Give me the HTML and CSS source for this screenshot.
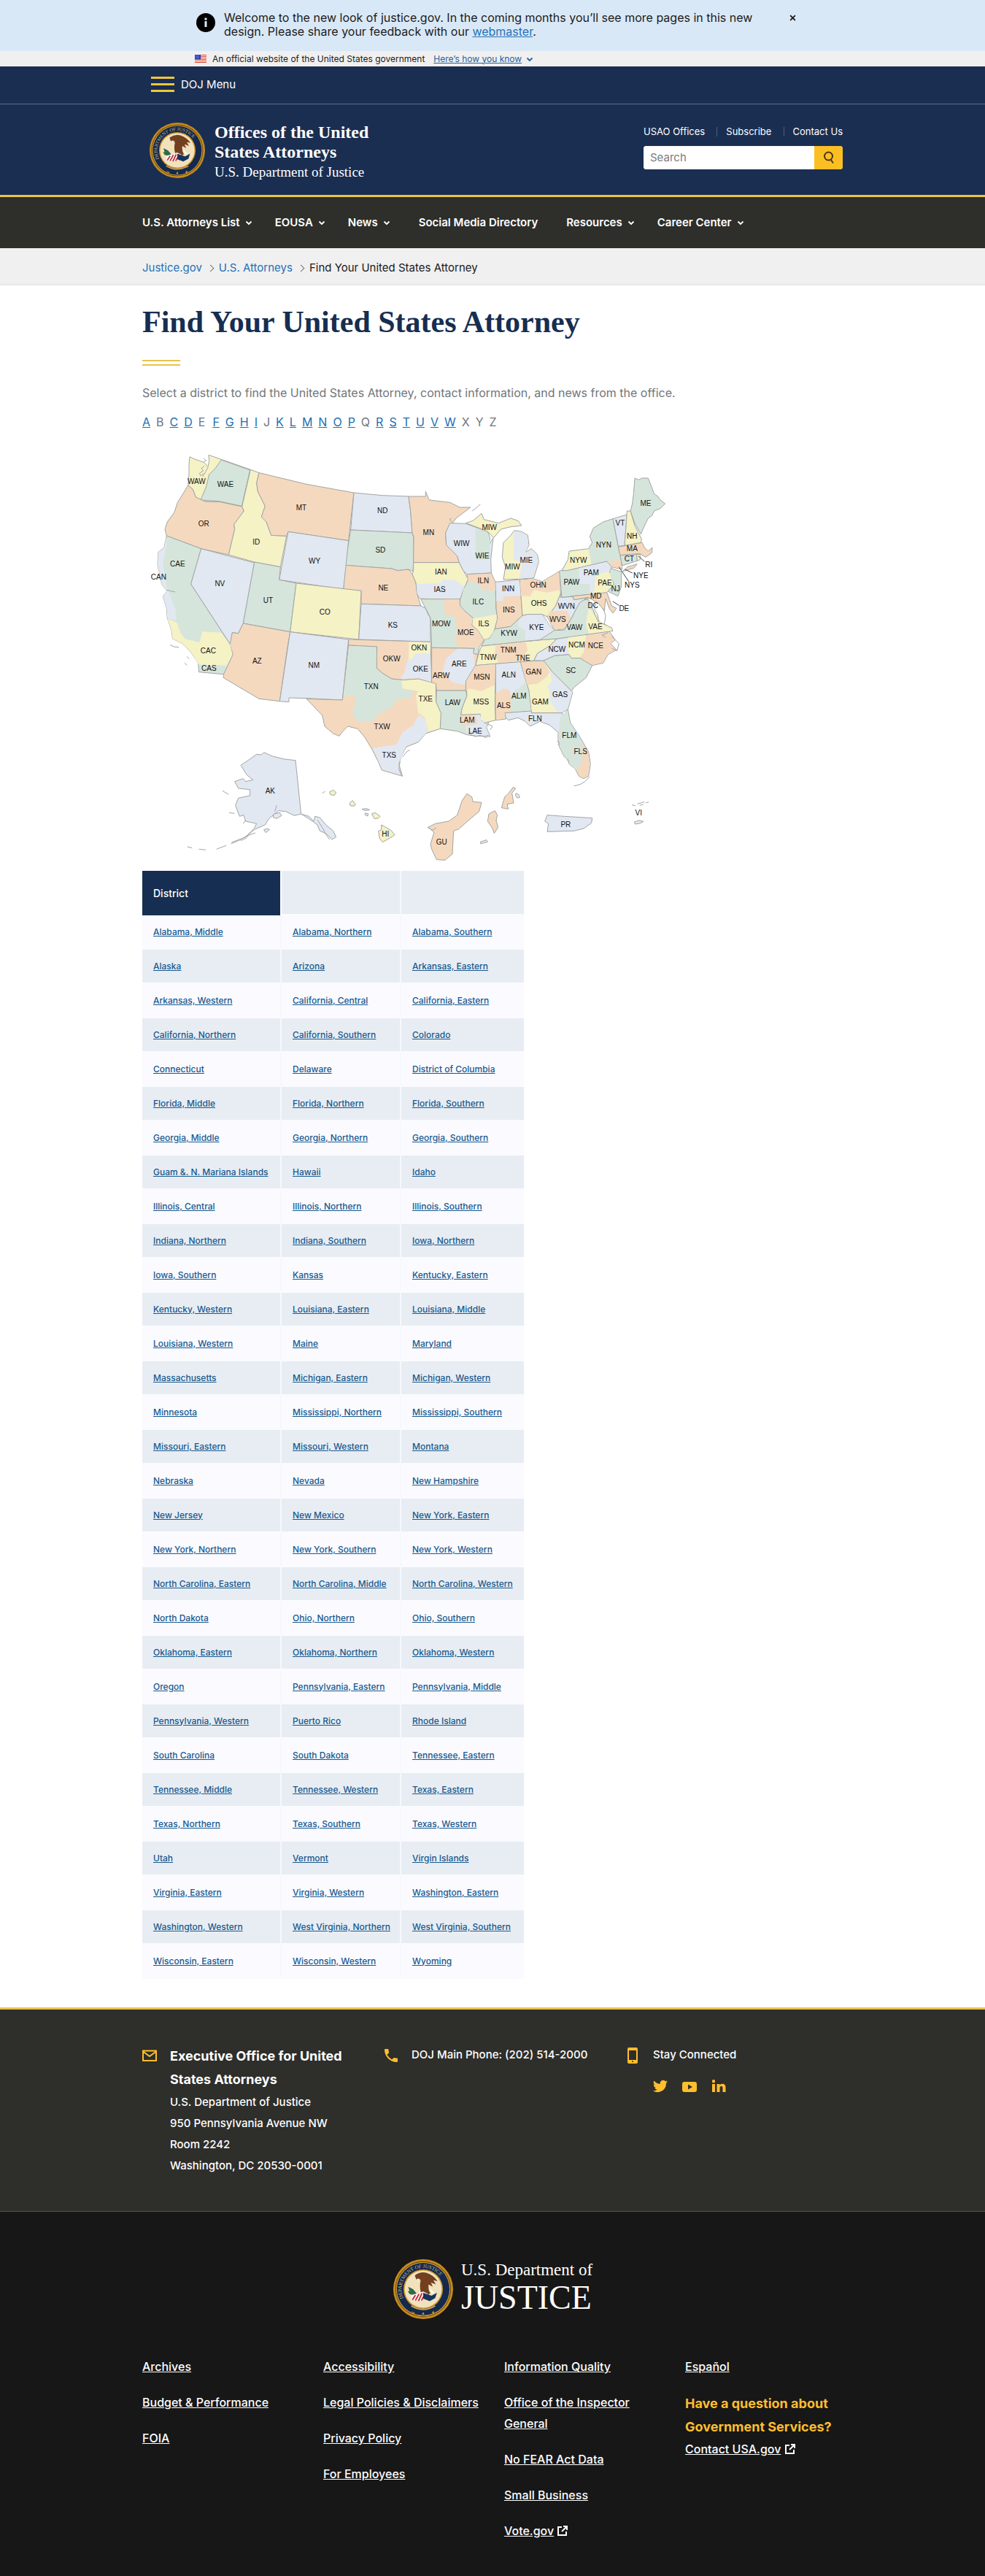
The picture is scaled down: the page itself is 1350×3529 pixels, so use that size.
FILE: index.html
```html
<!DOCTYPE html>
<html lang="en">
<head>
<meta charset="utf-8">
<meta name="viewport" content="width=device-width, initial-scale=1">
<title>Offices of the United States Attorneys | Find Your United States Attorney</title>
<link rel="stylesheet" href="styles.css">
</head>
<body>
<svg class="defs" width="0" height="0" aria-hidden="true">
<defs>
<symbol id="chev" viewBox="0 0 10 10"><path d="M1.5 3.5L5 7l3.500-3.500" fill="none" stroke="currentColor" stroke-width="1.800"/></symbol>
<symbol id="ext" viewBox="0 0 16 16"><path d="M7 3H2v11h11V9M9 2h5v5M14 2L7 9" fill="none" stroke="currentColor" stroke-width="2"/></symbol>
<symbol id="seal" viewBox="0 0 100 100">
<circle cx="50" cy="50" r="50" fill="#c78a1c"/><circle cx="50" cy="50" r="46.500" fill="#4a3a1c"/><circle cx="50" cy="50" r="45.500" fill="#d59b2a"/><circle cx="50" cy="50" r="44" fill="#14294d"/>
<circle cx="50" cy="50" r="33" fill="#c99429"/><circle cx="50" cy="50" r="31" fill="#f1e2bd"/>
<path id="arc" d="M18 67A36 36 0 1 1 82 67" fill="none"/>
<text font-family="Liberation Serif, serif" font-size="8.500" fill="#c9b984"><textPath href="#arc" startOffset="2">DEPARTMENT OF JUSTICE</textPath></text>
<path d="M31 87l1.500 3 3-1-2 2.500M50 89l1.500 3-3 0zM67 87l1 3-3 0z" fill="#d59b2a" stroke="#d59b2a"/>
<path d="M30 78Q50 90 70 78" fill="none" stroke="#c7a565" stroke-width="2"/>
<path d="M36 27Q46 20 56 23Q68 27 74 37L67 35L71 42L63 39L66 46L59 42Q58 52 62 57L54 62Q46 60 45 50Q44 41 46 36L38 33Z" fill="#73401f"/>
<path d="M25 46l8 4 6 7-2 5-9-6z" fill="#2c6b4c"/><path d="M24 53l6 1 3 6-6-2z" fill="#2c6b4c"/>
<path d="M30 60L50 54L58 58L45 70L30 68Z" fill="#f9f1ea"/>
<path d="M32 68l5-8M37 69l6-11M42 70l6-13M47 69l6-11" stroke="#b8283a" stroke-width="2.200"/>
<path d="M50 56L64 61L73 56L70 65L61 70L50 66Z" fill="#16345f"/><path d="M60 48l4 9 5-1z" fill="#fff"/><path d="M46 34l-6-2 1 4z" fill="#fff"/>
</symbol>
</defs>
</svg>

<section class="alert" aria-label="Site notice">
<div class="narrow alert-in">
<svg class="info" viewBox="0 0 26 26" aria-hidden="true"><circle cx="13" cy="13" r="13"/><path d="M11.500 11h3v8h-3zM11.500 6.500h3v3h-3z" fill="#d9e8f6"/></svg>
<p>Welcome to the new look of justice.gov. In the coming months you’ll see more pages in this new design. Please share your feedback with our <a href="#">webmaster</a>.</p>
<button class="close" type="button" aria-label="Close"><svg viewBox="0 0 8 8"><path d="M1 1l6 6M7 1L1 7" stroke="#1b1b1b" stroke-width="1.600"/></svg></button>
</div>
</section>

<section class="gov" aria-label="Official website">
<div class="narrow gov-in">
<svg class="flag" viewBox="0 0 16 11" aria-hidden="true"><path fill="#fff" d="M0 0h16v11H0z"/><path d="M0 .5h16M0 2.500h16M0 4.500h16M0 6.500h16M0 8.500h16M0 10.500h16" stroke="#db3e1f"/><path fill="#1e33b1" d="M0 0h8v6H0z"/><path d="M1 1.500h6M1 3h6M1 4.500h6" stroke="#fff" stroke-width=".6" stroke-dasharray="1 1"/></svg>
<span>An official website of the United States government</span>
<button type="button"><u>Here’s how you know</u><svg class="chev"><use href="#chev"/></svg></button>
</div>
</section>

<header class="top">
<div class="menu-row"><div class="wrap">
<button class="menu" type="button"><span class="bars"><i></i><i></i><i></i></span>DOJ Menu</button>
</div></div>
<div class="wrap brand-row">
<a class="brand" href="#"><svg class="seal"><use href="#seal"/></svg><span class="brand-text"><b>Offices of the United States Attorneys</b><span>U.S. Department of Justice</span></span></a>
<div class="tools">
<ul class="quick"><li><a href="#">USAO Offices</a></li><li><a href="#">Subscribe</a></li><li><a href="#">Contact Us</a></li></ul>
<form class="search" role="search"><input type="search" placeholder="Search" aria-label="Search"><button type="submit" aria-label="Search"><svg viewBox="0 0 16 20"><circle cx="7.500" cy="8" r="5.500"/><path d="M10.500 12.500l3.500 5"/></svg></button></form>
</div>
</div>
</header>

<nav class="nav" aria-label="Primary">
<ul class="wrap">
<li><button type="button">U.S. Attorneys List<svg class="chev"><use href="#chev"/></svg></button></li>
<li><button type="button">EOUSA<svg class="chev"><use href="#chev"/></svg></button></li>
<li><button type="button">News<svg class="chev"><use href="#chev"/></svg></button></li>
<li class="plain"><a href="#">Social Media Directory</a></li>
<li><button type="button">Resources<svg class="chev"><use href="#chev"/></svg></button></li>
<li><button type="button">Career Center<svg class="chev"><use href="#chev"/></svg></button></li>
</ul>
</nav>

<nav class="crumbs" aria-label="Breadcrumb">
<ol class="wrap">
<li><a href="#">Justice.gov</a></li><li><a href="#">U.S. Attorneys</a></li><li>Find Your United States Attorney</li>
</ol>
</nav>

<main class="wrap main">
<h1>Find Your United States Attorney</h1>
<div class="rule"></div>
<p class="lead">Select a district to find the United States Attorney, contact information, and news from the office.</p>
<p class="letters"><a href="#">A</a><span>B</span><a href="#">C</a><a href="#">D</a><span class="wide">E</span><a href="#">F</a><a href="#">G</a><a href="#">H</a><a href="#">I</a><span>J</span><a href="#">K</a><a href="#">L</a><a href="#">M</a><a href="#">N</a><a href="#">O</a><a href="#">P</a><span>Q</span><a href="#">R</a><a href="#">S</a><a href="#">T</a><a href="#">U</a><a href="#">V</a><a href="#">W</a><span>X</span><span>Y</span><span>Z</span></p>

<svg class="map" viewBox="15 30 2190 1749" role="img" aria-label="Map of United States Attorney districts">
<g class="area">
<path class="y" d="M210 77L225 85 268 100 285 118 290 95 288 70 340 88 460 130 425 282 330 262 275 262 235 243 222 210 203 195 207 150 207 110Z"/>
<path class="g" d="M340 90L458 132 424 280 330 260 255 255 262 238 278 200 290 150 315 125Z"/>
<path class="p" d="M203 195L222 210 235 243 275 262 330 262 425 282 433 300 392 355 395 375 370 480 257 455 115 402 108 375 118 345 147 305 160 265 185 225Z"/>
<path class="y" d="M460 130L495 143 485 185 490 220 515 270 520 280 505 325 525 345 545 400 608 403 583 530 476 510 370 480 395 375 392 355 433 300 425 282Z"/>
<path class="p" d="M495 143L690 190 885 225 863 422 615 385 608 403 545 400 525 345 505 325 520 280 490 220 485 185Z"/>
<path class="b" d="M885 225L1000 236 1110 240 1118 300 1125 390 872 378Z"/>
<path class="g" d="M872 378L1125 390 1131 410 1131 490 1128 548 1110 540 1065 545 1040 537 848 523Z"/>
<path class="p" d="M848 523L1040 537 1065 545 1110 540 1125 560 1140 595 1145 640 1160 690 915 682 915 628 842 622Z"/>
<path class="b" d="M615 385L863 422 842 622 578 583Z"/>
<path class="g" d="M115 402L257 455 215 600 378 850 388 890 360 972 248 962 245 925 215 880 180 845 140 825 135 790 118 740 115 700 100 650 118 630 95 600 78 520 80 470 105 450Z"/>
<path class="b" d="M257 455L476 513 430 762 410 803 385 800 378 850 215 600Z"/>
<path class="g" d="M476 510L583 530 578 583 648 597 623 797 430 762Z"/>
<path class="y" d="M648 597L915 628 905 828 623 797Z"/>
<path class="p" d="M430 762L623 797 612 860 580 1082 495 1072 348 985 350 970 388 890 375 850 385 800 410 803Z"/>
<path class="b" d="M623 797L863 828 838 1077 690 1070 618 1068 618 1085 580 1082Z"/>
<path class="b" d="M915 682L1160 690 1180 700 1190 725 1200 740 1200 838 905 828Z"/>
<path class="p" d="M863 828L1200 838 1205 1005 1150 990 1090 995 1040 990 1000 965 978 945 980 858 863 852Z"/>
<path class="p" d="M863 852L980 858 978 945 1000 965 1040 990 1090 995 1150 990 1205 1005 1222 1010 1223 1085 1243 1130 1240 1195 1180 1215 1150 1250 1100 1270 1080 1310 1070 1340 1085 1390 1000 1365 985 1330 960 1280 930 1230 900 1195 860 1185 840 1205 825 1225 800 1215 765 1185 755 1140 690 1072 838 1077Z"/>
<path class="p" d="M1110 240L1180 240 1180 220 1195 255 1280 265 1320 285 1365 285 1305 330 1280 365 1262 390 1265 440 1310 485 1318 512 1130 512 1131 405 1125 390 1118 300Z"/>
<path class="y" d="M1130 512L1318 512 1335 545 1355 580 1345 605 1335 620 1322 665 1157 660 1145 640 1140 595 1125 560 1130 545Z"/>
<path class="b" d="M1280 350L1345 352 1435 385 1445 410 1440 440 1458 410 1448 500 1450 555 1350 560 1335 545 1318 512 1310 485 1265 440 1262 390Z"/>
<path class="y" d="M1345 350L1375 340 1410 310 1420 335 1480 350 1530 330 1560 340 1575 360 1530 365 1490 375 1460 410 1435 385 1400 370Z"/>
<path class="y" d="M1500 582L1508 530 1495 490 1500 430 1530 400 1545 380 1575 385 1600 400 1605 440 1590 470 1615 455 1640 480 1645 510 1625 575 1565 580Z"/>
<path class="g" d="M1350 560L1450 555 1467 592 1470 700 1475 745 1460 800 1440 825 1420 830 1395 790 1370 770 1375 740 1340 710 1320 690 1322 665 1335 620 1345 605 1355 580Z"/>
<path class="p" d="M1467 592L1567 582 1578 730 1550 755 1530 775 1465 785 1475 740 1470 700Z"/>
<path class="y" d="M1567 582L1620 578 1660 590 1730 548 1735 640 1715 690 1680 735 1660 725 1600 725 1578 730Z"/>
<path class="g" d="M1465 785L1530 775 1550 755 1578 730 1600 725 1660 725 1690 770 1710 790 1650 830 1410 855 1425 825 1440 825Z"/>
<path class="y" d="M1410 855L1650 830 1720 825 1690 855 1640 885 1625 915 1385 935 1400 880Z"/>
<path class="g" d="M1160 662L1320 662 1322 690 1340 710 1375 740 1370 770 1395 790 1420 830 1400 860 1395 890 1375 885 1380 865 1205 862 1200 740 1180 700Z"/>
<path class="p" d="M1205 862L1380 865 1375 885 1395 890 1385 935 1345 1000 1345 1038 1225 1038 1222 1010 1205 1005Z"/>
<path class="g" d="M1225 1038L1345 1038 1350 1060 1330 1110 1325 1138 1405 1135 1410 1160 1440 1170 1430 1190 1445 1225 1390 1225 1350 1220 1310 1205 1240 1195 1243 1130 1223 1085Z"/>
<path class="y" d="M1385 935L1468 928 1465 1100 1468 1160 1425 1170 1405 1160 1405 1135 1325 1138 1330 1110 1350 1060 1345 1000Z"/>
<path class="b" d="M1468 928L1570 920 1605 1040 1615 1122 1505 1130 1510 1155 1468 1160Z"/>
<path class="y" d="M1570 920L1665 915 1700 960 1750 1010 1785 1045 1765 1115 1740 1130 1615 1130 1605 1040Z"/>
<path class="b" d="M1720 825L1935 795 1960 830 1940 845 1965 870 1930 890 1910 925 1865 935 1815 905 1780 905 1770 890 1710 895 1665 915 1625 915 1640 885 1690 855Z"/>
<path class="g" d="M1665 915L1710 895 1770 890 1780 905 1815 905 1865 935 1840 985 1790 1025 1780 1040 1750 1010 1700 960Z"/>
<path class="g" d="M1590 835L1650 830 1710 790 1750 790 1780 740 1800 700 1820 665 1850 665 1875 720 1900 760 1945 780 1950 793 1720 825Z"/>
<path class="b" d="M1735 640L1735 655 1785 652 1790 665 1850 655 1815 675 1800 700 1780 740 1750 785 1710 790 1680 735 1715 690Z"/>
<path class="g" d="M1730 548L1755 535 1760 545 1925 507 1945 530 1935 560 1955 600 1925 635 1740 655Z"/>
<path class="p" d="M1785 650L1925 635 1945 690 1965 700 1950 720 1935 700 1920 660 1915 710 1890 680 1850 655 1790 665Z"/>
<path class="g" d="M1940 535L1985 550 1985 610 1970 650 1930 630 1955 600 1935 560Z"/>
<path class="g" d="M1740 545L1765 500 1770 465 1850 455 1865 430 1855 405 1870 370 1910 345 1950 332 1972 445 1980 482 1988 540 1945 530 1925 507 1760 545Z"/>
<path class="b" d="M1950 332L2008 315 2005 350 1998 442 1972 445Z"/>
<path class="y" d="M2008 300L2022 300 2040 360 2068 415 2065 430 1998 442 2005 350Z"/>
<path class="g" d="M2022 300L2030 270 2035 230 2040 165 2055 172 2070 165 2095 165 2120 230 2135 240 2145 255 2165 270 2145 290 2120 300 2110 320 2095 330 2080 360 2065 395 2040 350Z"/>
<path class="p" d="M1972 448L2070 430 2080 450 2095 465 2112 450 2110 472 2085 490 2060 475 1980 482Z"/>
<path class="g" d="M1980 482L2048 478 2050 505 1988 525Z"/>
<path class="y" d="M2048 478L2062 478 2062 500 2050 505Z"/>
<path class="p" d="M1990 548L2010 530 2050 518 2035 535Z"/>
<path class="b" d="M1505 1130L1615 1122 1615 1130 1740 1130 1745 1142 1765 1115 1775 1170 1815 1230 1850 1290 1858 1340 1850 1390 1830 1400 1810 1390 1795 1360 1770 1340 1765 1320 1750 1310 1730 1270 1725 1240 1725 1210 1690 1180 1650 1165 1610 1185 1590 1165 1560 1150 1520 1160 1510 1150Z"/>
<path class="b" d="M515 1292L550 1308 600 1320 645 1325 668 1545 640 1552 605 1535 575 1532 560 1545 535 1565 520 1590 475 1610 440 1640 475 1605 485 1585 440 1575 432 1550 415 1555 398 1510 410 1480 458 1470 458 1445 410 1440 395 1412 430 1400 440 1412 470 1405 445 1385 420 1345 450 1325 485 1300 505 1302Z"/>
<path class="b" d="M668 1545L700 1555 720 1575 725 1555 745 1560 770 1590 800 1615 812 1640 795 1650 770 1625 745 1615 735 1590 700 1565Z"/>
<path class="y" d="M785 1455l15-8 12 10-8 12-15-3zM868 1500l12-10 12 18-10 5-12-2zM958 1545l15-5 20 15-8 8-15 2zM998 1590l15 8 25 15 15 18-22 15-28 15-12-15-5-30 12-5z"/>
<path class="b" d="M918 1525l20-2 12 6-20 2zM930 1542l14 2-2 10-10-4zM555 1545l25-5 8 12-20 12-15-5zM515 1610l15-5 8 5-15 12z"/>
<path class="p" d="M1350 1462L1370 1475 1375 1495 1410 1498 1400 1535 1370 1560 1315 1608 1295 1615 1290 1710 1260 1735 1225 1733 1205 1690 1200 1670 1215 1620 1190 1600 1220 1585 1275 1575 1310 1550 1330 1490Z"/>
<path class="p" d="M1540 1435L1550 1440 1535 1460 1542 1500 1515 1505 1520 1525 1492 1520 1505 1475 1520 1462ZM1465 1532L1475 1550 1470 1572 1478 1600 1462 1625 1455 1605 1435 1575 1440 1545Z"/>
<path class="b" d="M1552 1460l10 5 5 12-10 3-8-10zM1405 1660l25-8 5 8-28 8zM2038 1578l20-6 18 4-15 8-20 3z"/>
<path class="b" d="M1680 1550L1750 1555 1865 1562 1862 1582 1830 1605 1790 1615 1680 1618 1685 1585 1670 1575Z"/>
</g>
<g class="sub">
<path class="b" d="M115 404L105 450 80 470 78 520 95 600 118 630 100 650 115 700 118 740 155 750 150 700 115 610 100 520 115 440Z"/>
<path class="y" d="M118 742L158 760 172 800 190 825 250 840 262 795 340 800 376 850 386 890 362 935 248 932 215 880 180 845 140 825 135 790Z"/>
<path class="y" d="M1112 838L1199 840 1199 888 1140 885 1125 910 1110 910Z"/>
<path class="b" d="M1140 885L1199 888 1203 1003 1150 988 1075 990 1095 960 1100 930 1110 910 1125 910Z"/>
<path class="g" d="M865 854L978 860 976 947 1000 967 1040 992 1088 997 1085 1030 1130 1040 1120 1068 1060 1075 1040 1110 990 1130 960 1165 900 1168 880 1130 895 1060 842 1060Z"/>
<path class="y" d="M1080 997L1150 992 1220 1010 1221 1085 1241 1130 1238 1193 1190 1207 1178 1150 1150 1130 1140 1060 1150 1040 1085 1030Z"/>
<path class="b" d="M1150 1140L1180 1155 1188 1207 1150 1247 1100 1267 1068 1340 1080 1386 1002 1363 962 1275 1060 1260 1085 1210 1130 1180Z"/>
<path class="b" d="M1142 600L1240 598 1250 582 1300 585 1340 610 1320 660 1157 658 1145 640Z"/>
<path class="g" d="M1385 370L1433 387 1443 415 1446 500 1385 500Z"/>
<path class="b" d="M1542 384L1575 387 1598 402 1603 440 1590 472 1615 458 1638 480 1643 510 1623 573 1565 578 1575 520 1560 505 1542 500Z"/>
<path class="p" d="M1352 562L1449 557 1465 592 1468 628 1415 625 1400 600 1356 590Z"/>
<path class="y" d="M1374 742L1472 725 1473 745 1458 798 1440 823 1420 828 1395 788 1372 768Z"/>
<path class="b" d="M1469 594L1566 584 1571 648 1500 650 1500 670 1471 670Z"/>
<path class="p" d="M1569 584L1620 580 1660 592 1729 552 1733 625 1680 635 1625 625 1610 650 1572 650Z"/>
<path class="b" d="M1580 732L1600 727 1660 727 1690 772 1708 790 1650 828 1590 833 1590 790 1562 775 1560 752Z"/>
<path class="p" d="M1467 851L1590 838 1600 870 1570 918 1480 925 1465 890Z"/>
<path class="p" d="M1255 664L1318 664 1320 690 1340 712 1373 740 1368 770 1393 790 1418 830 1398 860 1315 860 1300 830 1310 790 1300 735 1258 725Z"/>
<path class="b" d="M1290 885L1310 866 1373 867 1383 935 1343 1000 1343 1015 1290 1005 1250 960 1265 905Z"/>
<path class="p" d="M1325 1140L1385 1138 1400 1175 1330 1180Z"/>
<path class="b" d="M1385 1137L1405 1137 1408 1162 1438 1172 1428 1190 1443 1223 1390 1223 1350 1218 1345 1185 1395 1175Z"/>
<path class="p" d="M1386 937L1466 930 1464 1015 1410 1040 1360 1030 1347 1040 1347 1000Z"/>
<path class="p" d="M1468 1050L1500 1030 1525 1035 1530 1065 1537 1125 1505 1128 1508 1153 1470 1158Z"/>
<path class="g" d="M1540 1045L1592 1005 1603 1040 1613 1120 1537 1126 1530 1065Z"/>
<path class="p" d="M1572 922L1663 917 1690 960 1680 980 1640 1010 1597 1015Z"/>
<path class="b" d="M1690 955L1700 962 1783 1047 1763 1115 1740 1128 1720 1125 1690 1080 1690 1040 1680 1020 1700 1000Z"/>
<path class="y" d="M1765 820L1840 810 1830 880 1812 903 1782 903 1770 888 1765 860Z"/>
<path class="p" d="M1840 811L1933 797 1958 830 1938 845 1962 870 1930 888 1908 923 1865 933 1815 903 1830 880Z"/>
<path class="y" d="M1850 700L1875 720 1905 762 1943 782 1948 791 1850 805 1840 760Z"/>
<path class="p" d="M1690 712L1760 710 1778 740 1750 783 1710 788 1682 735Z"/>
<path class="b" d="M1810 535L1925 509 1943 530 1935 550 1880 560 1870 640 1855 642 1855 600 1810 600Z"/>
<path class="y" d="M1880 560L1935 550 1953 600 1925 633 1870 640Z"/>
<path class="y" d="M1772 467L1850 457 1862 518 1762 543 1745 543 1767 500Z"/>
<path class="p" d="M1928 509L1982 500 1986 538 1945 528Z"/>
<path class="g" d="M1735 1145L1763 1118 1773 1170 1813 1230 1835 1270 1825 1330 1800 1365 1772 1340 1765 1320 1752 1310 1732 1270 1727 1240 1727 1205Z"/>
<path class="p" d="M1822 1250L1848 1290 1856 1340 1848 1388 1830 1398 1812 1390 1800 1365 1825 1330Z"/>
</g>
<g class="line">
<path d="M268 85l10 8-10 5M270 115l-12 10 8 10-16 10 5 10 12-8M285 120l-10 20-12 18M115 625l35 8M130 850l15 8 20 2M198 898l10 10M190 925l8 10M1370 300l15-10 20-18M1290 345l-12-10 8-5M1720 1245l10 8-5 10M1760 1320l10 12M1790 1430l25-6 20-12 20-20M200 1680l20 5M248 1690l28 3M320 1690l40-15M380 1668l35-15 30-18 35-12M382 1662l40-15 30-12M420 1655l25-12M345 1450l25 15M372 1540l22 3M755 1460l12-8M2028 1508l15 4M2050 1504l30-8M2060 1510l15-4M2085 1500l12-4M1188 1600l20 12 15-10M1880 680l-5 25 12 20 5 30M1910 700l10 30-5 35M1925 770l-35-15-20-40M1930 800l-25 10 15 10M1945 815l30 30-8 30-20-10M1420 1170l35 15-10 15M1355 1215l30 12 20-5 25 10 5-10 10 8M1085 1310l10-10 8-12 12-5M1075 1330l-5 30 10 25M735 1570l20 30 15 30 15 20M560 1535l8-25M440 1570l-10 15M1830 660l30 0"/>
<path class="dark" d="M1975 530l40 60M2000 540l30 15M2055 485l25 23M1950 672l25 16"/>
</g>
<g class="lbl">
<text x="238" y="189">WAW</text><text x="357" y="201">WAE</text><text x="268" y="363">OR</text><text x="484" y="438">ID</text><text x="669" y="297">MT</text><text x="1003" y="309">ND</text><text x="994" y="471">SD</text><text x="723" y="516">WY</text><text x="160" y="528">CAE</text><text x="82" y="582">CAN</text><text x="334" y="609">NV</text><text x="532" y="678">UT</text><text x="766" y="726">CO</text><text x="1006" y="627">NE</text><text x="1045" y="780">KS</text><text x="286" y="885">CAC</text><text x="289" y="957">CAS</text><text x="487" y="927">AZ</text><text x="721" y="945">NM</text><text x="1040" y="918">OKW</text><text x="956" y="1032">TXN</text><text x="1001" y="1197">TXW</text><text x="1030" y="1314">TXS</text><text x="541" y="1461">AK</text><text x="1015" y="1638">HI</text>
<text x="1192" y="398">MN</text><text x="1328" y="444">WIW</text><text x="1413" y="495">WIE</text><text x="1442" y="378">MIW</text><text x="1537" y="540">MIW</text><text x="1594" y="513">MIE</text><text x="1243" y="561">IAN</text><text x="1238" y="633">IAS</text><text x="1417" y="597">ILN</text><text x="1396" y="684">ILC</text><text x="1419" y="774">ILS</text><text x="1520" y="630">INN</text><text x="1522" y="717">INS</text><text x="1643" y="615">OHN</text><text x="1646" y="690">OHS</text><text x="1244" y="774">MOW</text><text x="1345" y="810">MOE</text><text x="1523" y="813">KYW</text><text x="1636" y="789">KYE</text><text x="1759" y="702">WVN</text><text x="1723" y="756">WVS</text><text x="1792" y="789">VAW</text><text x="1878" y="786">VAE</text><text x="1868" y="699">DC</text><text x="1880" y="660">MD</text><text x="1780" y="603">PAW</text><text x="1861" y="564">PAM</text><text x="1917" y="606">PAE</text><text x="1961" y="630">NJ</text><text x="2029" y="615">NYS</text><text x="2065" y="576">NYE</text><text x="2098" y="531">RI</text><text x="1996" y="711">DE</text><text x="1808" y="513">NYW</text><text x="1912" y="450">NYN</text><text x="2017" y="507">CT</text><text x="2029" y="465">MA</text><text x="2029" y="414">NH</text><text x="1980" y="360">VT</text><text x="2085" y="279">ME</text>
<text x="1153" y="873">OKN</text><text x="1159" y="960">OKE</text><text x="1180" y="1083">TXE</text><text x="1318" y="939">ARE</text><text x="1244" y="987">ARW</text><text x="1437" y="912">TNW</text><text x="1520" y="882">TNM</text><text x="1580" y="915">TNE</text><text x="1720" y="879">NCW</text><text x="1801" y="861">NCM</text><text x="1879" y="864">NCE</text><text x="1777" y="966">SC</text><text x="1411" y="993">MSN</text><text x="1408" y="1095">MSS</text><text x="1522" y="984">ALN</text><text x="1564" y="1071">ALM</text><text x="1501" y="1110">ALS</text><text x="1624" y="972">GAN</text><text x="1651" y="1095">GAM</text><text x="1733" y="1065">GAS</text><text x="1291" y="1098">LAW</text><text x="1351" y="1170">LAM</text><text x="1384" y="1215">LAE</text><text x="1630" y="1164">FLN</text><text x="1771" y="1233">FLM</text><text x="1817" y="1299">FLS</text><text x="1246" y="1671">GU</text><text x="1756" y="1599">PR</text><text x="2056" y="1551">VI</text>
</g>
</svg>

<table class="districts">
<thead><tr><th scope="col">District</th><td></td><td></td></tr></thead>
<tbody>
<tr><td><a href="#">Alabama, Middle</a></td><td><a href="#">Alabama, Northern</a></td><td><a href="#">Alabama, Southern</a></td></tr>
<tr><td><a href="#">Alaska</a></td><td><a href="#">Arizona</a></td><td><a href="#">Arkansas, Eastern</a></td></tr>
<tr><td><a href="#">Arkansas, Western</a></td><td><a href="#">California, Central</a></td><td><a href="#">California, Eastern</a></td></tr>
<tr><td><a href="#">California, Northern</a></td><td><a href="#">California, Southern</a></td><td><a href="#">Colorado</a></td></tr>
<tr><td><a href="#">Connecticut</a></td><td><a href="#">Delaware</a></td><td><a href="#">District of Columbia</a></td></tr>
<tr><td><a href="#">Florida, Middle</a></td><td><a href="#">Florida, Northern</a></td><td><a href="#">Florida, Southern</a></td></tr>
<tr><td><a href="#">Georgia, Middle</a></td><td><a href="#">Georgia, Northern</a></td><td><a href="#">Georgia, Southern</a></td></tr>
<tr><td><a href="#">Guam &amp;. N. Mariana Islands</a></td><td><a href="#">Hawaii</a></td><td><a href="#">Idaho</a></td></tr>
<tr><td><a href="#">Illinois, Central</a></td><td><a href="#">Illinois, Northern</a></td><td><a href="#">Illinois, Southern</a></td></tr>
<tr><td><a href="#">Indiana, Northern</a></td><td><a href="#">Indiana, Southern</a></td><td><a href="#">Iowa, Northern</a></td></tr>
<tr><td><a href="#">Iowa, Southern</a></td><td><a href="#">Kansas</a></td><td><a href="#">Kentucky, Eastern</a></td></tr>
<tr><td><a href="#">Kentucky, Western</a></td><td><a href="#">Louisiana, Eastern</a></td><td><a href="#">Louisiana, Middle</a></td></tr>
<tr><td><a href="#">Louisiana, Western</a></td><td><a href="#">Maine</a></td><td><a href="#">Maryland</a></td></tr>
<tr><td><a href="#">Massachusetts</a></td><td><a href="#">Michigan, Eastern</a></td><td><a href="#">Michigan, Western</a></td></tr>
<tr><td><a href="#">Minnesota</a></td><td><a href="#">Mississippi, Northern</a></td><td><a href="#">Mississippi, Southern</a></td></tr>
<tr><td><a href="#">Missouri, Eastern</a></td><td><a href="#">Missouri, Western</a></td><td><a href="#">Montana</a></td></tr>
<tr><td><a href="#">Nebraska</a></td><td><a href="#">Nevada</a></td><td><a href="#">New Hampshire</a></td></tr>
<tr><td><a href="#">New Jersey</a></td><td><a href="#">New Mexico</a></td><td><a href="#">New York, Eastern</a></td></tr>
<tr><td><a href="#">New York, Northern</a></td><td><a href="#">New York, Southern</a></td><td><a href="#">New York, Western</a></td></tr>
<tr><td><a href="#">North Carolina, Eastern</a></td><td><a href="#">North Carolina, Middle</a></td><td><a href="#">North Carolina, Western</a></td></tr>
<tr><td><a href="#">North Dakota</a></td><td><a href="#">Ohio, Northern</a></td><td><a href="#">Ohio, Southern</a></td></tr>
<tr><td><a href="#">Oklahoma, Eastern</a></td><td><a href="#">Oklahoma, Northern</a></td><td><a href="#">Oklahoma, Western</a></td></tr>
<tr><td><a href="#">Oregon</a></td><td><a href="#">Pennsylvania, Eastern</a></td><td><a href="#">Pennsylvania, Middle</a></td></tr>
<tr><td><a href="#">Pennsylvania, Western</a></td><td><a href="#">Puerto Rico</a></td><td><a href="#">Rhode Island</a></td></tr>
<tr><td><a href="#">South Carolina</a></td><td><a href="#">South Dakota</a></td><td><a href="#">Tennessee, Eastern</a></td></tr>
<tr><td><a href="#">Tennessee, Middle</a></td><td><a href="#">Tennessee, Western</a></td><td><a href="#">Texas, Eastern</a></td></tr>
<tr><td><a href="#">Texas, Northern</a></td><td><a href="#">Texas, Southern</a></td><td><a href="#">Texas, Western</a></td></tr>
<tr><td><a href="#">Utah</a></td><td><a href="#">Vermont</a></td><td><a href="#">Virgin Islands</a></td></tr>
<tr><td><a href="#">Virginia, Eastern</a></td><td><a href="#">Virginia, Western</a></td><td><a href="#">Washington, Eastern</a></td></tr>
<tr><td><a href="#">Washington, Western</a></td><td><a href="#">West Virginia, Northern</a></td><td><a href="#">West Virginia, Southern</a></td></tr>
<tr><td><a href="#">Wisconsin, Eastern</a></td><td><a href="#">Wisconsin, Western</a></td><td><a href="#">Wyoming</a></td></tr>
</tbody>
</table>
</main>

<footer>
<div class="contact"><div class="wrap contact-in">
<div class="cell"><svg class="ico" viewBox="0 0 24 24"><path d="M3 5.500h18v13.500H3zM3 6.500l9 6.500 9-6.500" fill="none" stroke="currentColor" stroke-width="2"/></svg>
<address><strong>Executive Office for United States Attorneys</strong>U.S. Department of Justice<br>950 Pennsylvania Avenue NW<br>Room 2242<br>Washington, DC 20530-0001</address></div>
<div class="cell"><svg class="ico" viewBox="0 0 24 24"><path d="M6.600 10.800c1.400 2.800 3.800 5.100 6.600 6.600l2.200-2.200c.3-.3.700-.4 1-.2 1.100.4 2.300.6 3.600.6.600 0 1 .4 1 1V20c0 .6-.4 1-1 1C10.600 21 3 13.400 3 4c0-.6.500-1 1-1h3.500c.6 0 1 .4 1 1 0 1.200.2 2.500.6 3.600.1.300 0 .7-.2 1z" fill="currentColor"/></svg>
<p>DOJ Main Phone: (202) 514-2000</p></div>
<div class="cell"><svg class="ico" viewBox="0 0 24 24"><path fill-rule="evenodd" d="M7 1h10a2 2 0 0 1 2 2v18a2 2 0 0 1-2 2H7a2 2 0 0 1-2-2V3a2 2 0 0 1 2-2zM7 5v13h10V5zM11 19.500v1.500h2v-1.500z" fill="currentColor"/></svg>
<div><p>Stay Connected</p>
<ul class="social">
<li><a href="#" aria-label="Twitter"><svg viewBox="0 0 20 18"><path d="M20 2.800a8 8 0 0 1-2.300.7 4 4 0 0 0 1.800-2.300 8 8 0 0 1-2.600 1A4.100 4.100 0 0 0 9.900 6 11.600 11.600 0 0 1 1.400 1.600a4.100 4.100 0 0 0 1.300 5.500 4 4 0 0 1-1.900-.5 4.100 4.100 0 0 0 3.300 4.100 4 4 0 0 1-1.800 0 4.100 4.100 0 0 0 3.800 2.900A8.200 8.200 0 0 1 0 15.300 11.600 11.600 0 0 0 17.900 5 8 8 0 0 0 20 2.800z"/></svg></a></li>
<li><a href="#" aria-label="YouTube"><svg viewBox="0 0 20 18"><path fill-rule="evenodd" d="M3 3h14a3 3 0 0 1 3 3v8a3 3 0 0 1-3 3H3a3 3 0 0 1-3-3V6a3 3 0 0 1 3-3zM8 6.500v7l6-3.500z"/></svg></a></li>
<li><a href="#" aria-label="LinkedIn"><svg viewBox="0 0 20 18"><path d="M1 6h4v11H1zM3 0a2.200 2.200 0 1 1 0 4.400A2.200 2.200 0 0 1 3 0zM7.500 6h3.800v1.600c.6-1.100 2-1.900 3.700-1.900 3.700 0 4.500 2.300 4.500 5.300v6h-4v-5.300c0-1.300-.2-2.700-1.900-2.700s-2.100 1.300-2.100 2.700V17h-4z"/></svg></a></li>
</ul></div></div>
</div></div>
<div class="base"><div class="wrap">
<a class="doj" href="#"><svg class="seal-lg"><use href="#seal"/></svg><span class="doj-text"><span>U.S. Department of</span><span class="just">JUSTICE</span></span></a>
<div class="cols">
<ul><li><a href="#">Archives</a></li><li><a href="#">Budget &amp; Performance</a></li><li><a href="#">FOIA</a></li></ul>
<ul><li><a href="#">Accessibility</a></li><li><a href="#">Legal Policies &amp; Disclaimers</a></li><li><a href="#">Privacy Policy</a></li><li><a href="#">For Employees</a></li></ul>
<ul><li><a href="#">Information Quality</a></li><li><a href="#">Office of the Inspector General</a></li><li><a href="#">No FEAR Act Data</a></li><li><a href="#">Small Business</a></li><li><a href="#">Vote.gov</a> <svg class="ext"><use href="#ext"/></svg></li></ul>
<ul><li><a href="#">Español</a></li><li><strong>Have a question about Government Services?</strong><a href="#">Contact USA.gov</a> <svg class="ext"><use href="#ext"/></svg></li></ul>
</div>
</div></div>
</footer>
</body>
</html>
```
FILE: styles.css
```css
* { box-sizing: border-box; }
body { margin: 0; background: #fff; color: #1b1b1b; font: 15px/24px Inter, "Liberation Sans", sans-serif; }
p, ul, ol, h1 { margin: 0; padding: 0; }
ul, ol { list-style: none; }
button { border: 0; padding: 0; background: none; color: inherit; font: inherit; cursor: pointer; }
svg { display: block; flex: none; }
.defs { position: absolute; }
.wrap { max-width: 960px; margin: 0 auto; }
.narrow { max-width: 832px; margin: 0 auto; padding-left: 8px; }
.chev { width: 10px; height: 10px; }

.alert { background: #d9e8f6; }
.alert-in { display: flex; align-items: flex-start; padding-top: 15px; padding-bottom: 16px; min-height: 70px; font-size: 16px; line-height: 19px; }
.alert p { flex: 1; max-width: 732px; margin-left: 12px; }
.alert a { color: #2672b8; }
.info { width: 26px; height: 26px; margin: 3px 0 0 2px; }
.close { margin: 5px 0 0 auto; }
.close svg { width: 9px; height: 9px; }

.gov { background: #f0f0f0; }
.gov-in { display: flex; align-items: center; height: 21px; font-size: 12px; }
.flag { width: 16px; height: 11px; margin-right: 8px; }
.gov button { display: flex; align-items: center; gap: 6px; margin-left: 12px; color: #1f62a0; }

.top { background: #1a2e51; color: #fff; border-bottom: 3px solid #e9c545; }
.top a { color: #fff; text-decoration: none; }
.menu-row { border-bottom: 1px solid #60708f; }
.menu-row .wrap { padding: 11px 12px 13px; }
.menu { display: flex; align-items: center; gap: 9px; height: 27px; }
.bars { display: grid; gap: 6px; width: 32px; }
.bars i { height: 3px; background: #f0c73c; }
.brand-row { display: flex; justify-content: space-between; align-items: flex-start; padding: 25px 0 18px 10px; }
.brand { display: flex; gap: 13px; }
.seal { width: 76px; height: 76px; }
.brand-text { width: 230px; font: 19px/27px "Liberation Serif", serif; }
.brand-text b { display: block; font-size: 24px; }
.brand-text span { display: block; }
.tools { width: 273px; }
.quick { display: flex; justify-content: space-between; font-size: 13px; line-height: 24px; margin-bottom: 8px; }
.quick li + li::before { content: ""; display: inline-block; width: 1px; height: 13px; margin-right: 12px; vertical-align: -2px; background: #51617f; }
.search { display: flex; height: 32px; border-radius: 4px; overflow: hidden; background: #fff; }
.search input { flex: 1; min-width: 0; border: 0; padding: 0 9px; font: inherit; color: #1b1b1b; background: #fff; }
.search input::placeholder { color: #7c7c7c; }
.search button { width: 39px; display: grid; place-items: center; background: #fbbf24; }
.search svg { width: 16px; height: 20px; fill: none; stroke: #4d3510; stroke-width: 2; }

.nav { background: #2e2e2a; color: #fff; }
.nav ul { display: flex; align-items: center; gap: 31px; height: 70px; font-size: 15px; font-weight: 600; }
.nav button { display: flex; align-items: center; gap: 7px; }
.nav a { color: #fff; text-decoration: none; }
.nav .plain { margin: 0 8px; }

.crumbs { background: #f0f0f0; border-bottom: 2px solid #e8e8e8; }
.crumbs ol { display: flex; height: 49px; padding-top: 15px; }
.crumbs a { color: #2672b8; text-decoration: none; }
.crumbs li + li { display: flex; align-items: center; height: 24px; }
.crumbs li + li::before { content: ""; width: 6px; height: 6px; margin: 0 8px; border: solid #777; border-width: 1px 1px 0 0; transform: rotate(45deg); }

.main { padding: 26px 0 39px; }
h1 { font: bold 42px/48px "Liberation Serif", serif; color: #162e51; }
.rule { width: 52px; height: 8px; margin: 28px 0 25px; border: solid #e9c14c; border-width: 2px 0; }
.lead, .letters { font-size: 16px; color: #71767a; }
.letters { display: flex; flex-wrap: wrap; gap: 8px; margin: 16px 0 20px; }
.letters a { color: #1c6fb2; }
.letters .wide { margin-right: 2px; }

.map { width: 730px; max-width: 100%; height: auto; }
.area path, .line path { stroke: #a2a5a3; stroke-width: 3; stroke-linejoin: round; }
.line path { fill: none; }
.line .dark { stroke: #444; }
.map .y { fill: #f5f2c6; }
.map .p { fill: #f4d9bf; }
.map .b { fill: #e2e8f2; }
.map .g { fill: #d5e5dc; }
.lbl { font: 30px "Liberation Sans", sans-serif; text-anchor: middle; fill: #111; }

.districts { border-collapse: separate; border-spacing: 0; font-size: 12px; font-weight: 500; line-height: 18px; }
.districts th { min-width: 191px; height: 61px; padding: 0 12px 0 15px; text-align: left; font-size: 14px; font-weight: 500; color: #fff; background: #162e51; border-right: 2px solid #f8fafd; }
.districts td { height: 47px; min-width: 164px; padding: 0 12px 0 15px; border-right: 2px solid #f5f8fc; border-bottom: 2px solid #fafbff; background: #e8edf3; white-space: nowrap; }
.districts td:first-child { min-width: 191px; }
.districts td:last-child { min-width: 168px; border-right: 0; }
.districts tbody tr:nth-child(odd) td { background: #fafaff; }
.districts a { color: #17598f; }

.contact { background: #2e2e2a; color: #fff; border-top: 3px solid #e9c14c; border-bottom: 1px solid #555; font-weight: 500; }
.contact-in { display: grid; grid-template-columns: 331px 331px 1fr; padding: 48px 0 48px; line-height: 29px; }
.cell { display: flex; gap: 16px; }
.cell p { line-height: 28px; }
.ico { width: 24px; height: 24px; margin: 3px 0 0 -2px; color: #ffbe2e; }
.cell address { max-width: 250px; font-style: normal; }
.cell strong { display: block; font-size: 18px; line-height: 32px; }
.social { display: flex; gap: 20px; margin-top: 20px; }
.social svg { width: 20px; height: 18px; fill: #ffbe2e; }

.base { background: #171717; color: #fff; padding: 65px 0 29px; }
.base a { color: #fff; }
.doj { display: flex; gap: 11px; width: 272px; margin: 0 auto; text-decoration: none; }
.seal-lg { width: 82px; height: 82px; }
.doj-text { font: 23px/30px "Liberation Serif", serif; white-space: nowrap; }
.doj-text span { display: block; }
.doj-text .just { font-size: 46px; line-height: 46px; }
.cols { display: grid; grid-template-columns: repeat(4, 1fr); column-gap: 32px; margin-top: 51px; font-size: 16px; line-height: 29px; font-weight: 500; }
.cols li { margin-bottom: 20px; }
.cols strong { display: block; font-size: 18px; line-height: 32px; color: #ffbe2e; }
.ext { display: inline-block; width: 16px; height: 16px; vertical-align: -2px; }
```
